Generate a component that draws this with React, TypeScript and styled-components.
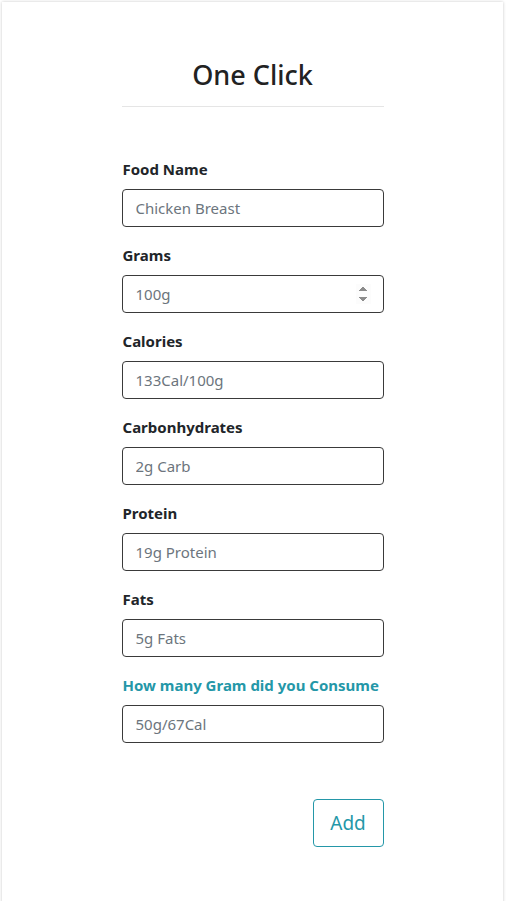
import React from "react";
import styled, { createGlobalStyle } from "styled-components";

const Global = createGlobalStyle`
  html, body { margin: 0; padding: 0; background: #fff; overflow: hidden; }
  body { font-family: "Noto Sans", "Open Sans", sans-serif; color: #212529; }
  * { box-sizing: border-box; }
`;

const Card = styled.div`
  margin: 2px 3px 0 2px;
  height: calc(100vh + 4px);
  background: #fff;
  box-shadow: 0 0 3px rgba(0, 0, 0, 0.22);
  display: flex;
  flex-direction: column;
  align-items: center;
  padding-top: 54px;
`;

const Title = styled.h1`
  margin: 0;
  font-size: 27px;
  line-height: 38px;
  font-weight: 500;
  color: #222;
`;

const Divider = styled.hr`
  width: 262px;
  margin: 12px 0 0;
  border: 0;
  border-top: 1px solid #e5e5e5;
`;

const Form = styled.form`
  width: 262px;
  margin-top: 51px;
  display: flex;
  flex-direction: column;
`;

const Group = styled.div`
  display: flex;
  flex-direction: column;
  margin-bottom: 17px;
`;

const Label = styled.label<{ $accent?: boolean }>`
  font-size: 15px;
  line-height: 22px;
  font-weight: 700;
  white-space: nowrap;
  color: ${(p) => (p.$accent ? "#2497a8" : "#212529")};
  margin-bottom: 9px;
  padding-left: 1px;
`;

const Input = styled.input`
  height: 38px;
  width: 100%;
  border: 1px solid #3a3a3a;
  border-radius: 4px;
  padding: 0 12px 0 13px;
  font-family: inherit;
  font-size: 15px;
  color: #495057;
  background: #fff;
  outline: none;
  &::placeholder { color: #6c757d; opacity: 1; }
  &::-webkit-inner-spin-button,
  &::-webkit-outer-spin-button { opacity: 1; }
`;

const Actions = styled.div`
  display: flex;
  justify-content: flex-end;
  margin-top: 39px;
`;

const AddButton = styled.button`
  width: 71px;
  height: 48px;
  border: 1px solid #2497a8;
  border-radius: 4px;
  background: #fff;
  color: #2497a8;
  font-family: inherit;
  font-size: 19px;
  cursor: pointer;
`;

const fields: { label: string; placeholder: string; type?: string; accent?: boolean }[] = [
  { label: "Food Name", placeholder: "Chicken Breast" },
  { label: "Grams", placeholder: "100g", type: "number" },
  { label: "Calories", placeholder: "133Cal/100g" },
  { label: "Carbonhydrates", placeholder: "2g Carb" },
  { label: "Protein", placeholder: "19g Protein" },
  { label: "Fats", placeholder: "5g Fats" },
  { label: "How many Gram did you Consume", placeholder: "50g/67Cal", accent: true },
];

export default function App() {
  return (
    <>
      <Global />
      <Card>
        <Title>One Click</Title>
        <Divider />
        <Form onSubmit={(e) => e.preventDefault()}>
          {fields.map((f, i) => (
            <Group key={i}>
              <Label $accent={f.accent} htmlFor={`f${i}`}>{f.label}</Label>
              <Input id={`f${i}`} type={f.type ?? "text"} placeholder={f.placeholder} />
            </Group>
          ))}
          <Actions>
            <AddButton type="submit">Add</AddButton>
          </Actions>
        </Form>
      </Card>
    </>
  );
}
